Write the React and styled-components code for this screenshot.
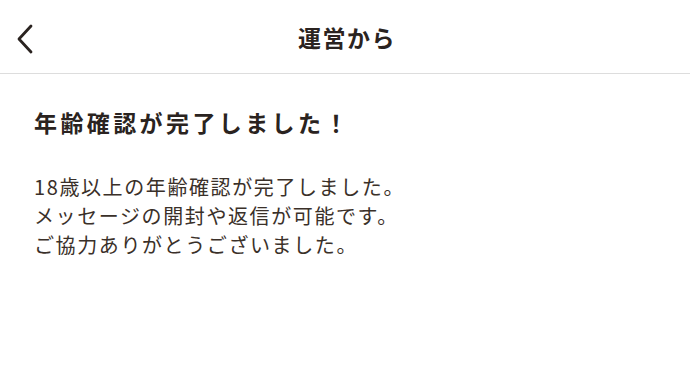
import React from 'react';
import styled, { createGlobalStyle } from 'styled-components';

const GlobalStyle = createGlobalStyle`
  body {
    margin: 0;
    background: #ffffff;
    font-family: "Noto Sans CJK JP", "Noto Sans", sans-serif;
    color: #3a3029;
  }
`;

export default function App() {
  return (
    <>
      <GlobalStyle />
      <Screen>
        <Header>
          <BackButton aria-label="戻る">
            <svg width="24" height="34" viewBox="0 0 24 34" fill="none">
              <path d="M17 4 L5 17 L17 30" stroke="#2a2320" strokeWidth="2.8" strokeLinecap="round" strokeLinejoin="round" />
            </svg>
          </BackButton>
          <Title>運営から</Title>
        </Header>

        <Content>
          <Heading>年齢確認が完了しました！</Heading>
          <Body>
            18歳以上の年齢確認が完了しました。<br />
            メッセージの開封や返信が可能です。<br />
            ご協力ありがとうございました。
          </Body>
        </Content>
      </Screen>
    </>
  );
}

const Screen = styled.div`
  width: 690px;
  height: 366px;
  background: #ffffff;
  overflow: hidden;
`;

const Header = styled.header`
  position: relative;
  height: 74px;
  display: flex;
  align-items: center;
  justify-content: center;
  border-bottom: 1.5px solid #dddddd;
  box-sizing: border-box;
`;

const BackButton = styled.div`
  position: absolute;
  left: 14px;
  top: 22px;
  width: 24px;
  height: 34px;
  display: flex;
`;

const Title = styled.h1`
  margin: 0 0 0 4px;
  font-size: 23px;
  font-weight: 700;
  letter-spacing: 1.5px;
  color: #2a2320;
`;

const Content = styled.main`
  padding: 27px 34px 0;
`;

const Heading = styled.h2`
  margin: 0;
  font-size: 23px;
  line-height: 42px;
  font-weight: 700;
  letter-spacing: 3.4px;
  color: #2a2320;
`;

const Body = styled.p`
  margin: 29px 0 0;
  font-size: 20px;
  line-height: 29px;
  letter-spacing: 1.6px;
  color: #3a3029;
`;
